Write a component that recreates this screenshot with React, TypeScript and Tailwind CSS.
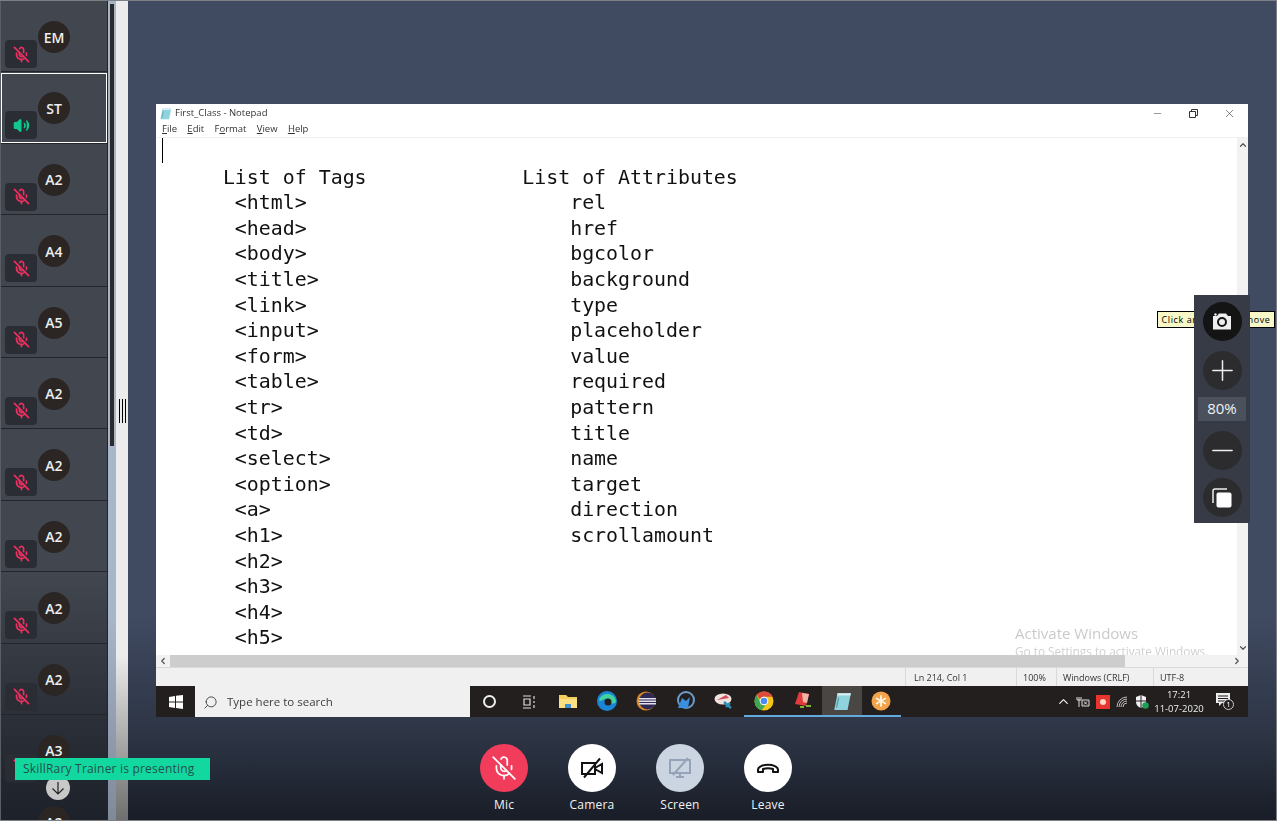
import { ChevronDown, ChevronLeft, ChevronRight, ChevronUp, MicOff, Minus, Plus, Search, Volume2, X } from "lucide-react";

const people = ["EM", "ST", "A2", "A4", "A5", "A2", "A2", "A2", "A2", "A2", "A3", "A2"];

const tags = ["<html>", "<head>", "<body>", "<title>", "<link>", "<input>", "<form>", "<table>", "<tr>", "<td>", "<select>", "<option>", "<a>", "<h1>", "<h2>", "<h3>", "<h4>", "<h5>"];
const attrs = ["rel", "href", "bgcolor", "background", "type", "placeholder", "value", "required", "pattern", "title", "name", "target", "direction", "scrollamount"];

const noteText = [
  "",
  "     List of Tags             List of Attributes",
  ...tags.map((tag, i) => ("      " + tag).padEnd(34, " ") + (attrs[i] ?? "")),
].join("\n");

function ParticipantRow({ name, active }: { name: string; active: boolean }) {
  return (
    <div className="relative h-[71.4px] shrink-0 border-b border-[#23252b]">
      <div className="absolute left-[37px] top-[20px] flex h-8 w-8 items-center justify-center rounded-full bg-[#2b2624] text-[14px] font-semibold text-[#eeeeee]">
        {name}
      </div>
      <div className="absolute left-[4px] top-[39px] flex h-[28px] w-[32px] items-center justify-center rounded-[4px] bg-[#2a2d34]">
        {active ? (
          <Volume2 size={17} className="fill-[#10c78f] text-[#10c78f]" strokeWidth={2} />
        ) : (
          <MicOff size={17} className="text-[#ee2f5f]" strokeWidth={2.4} />
        )}
      </div>
      {active && <div className="absolute bottom-0 left-0 right-0 top-[0.6px] border border-white" />}
    </div>
  );
}

function FolderIcon() {
  return (
    <svg width="20" height="18" viewBox="0 0 20 18">
      <path d="M1 3h7l2 2h9v11H1z" fill="#f6cf5a" />
      <path d="M1 7h18v9H1z" fill="#fbdf83" />
      <path d="M7 12h6v4H7z" fill="#3c8fd0" />
    </svg>
  );
}

function EdgeIcon() {
  return (
    <svg width="20" height="20" viewBox="0 0 20 20">
      <circle cx="10" cy="10" r="10" fill="#1b86d6" />
      <path d="M2 9c3-8 15-8 17 1 0 3-4 3-6 2 1-3-2-5-5-4-3 1-5 3-6 1z" fill="#43d39e" />
      <circle cx="11" cy="11" r="3.5" fill="#231f1e" />
    </svg>
  );
}

function EclipseIcon() {
  return (
    <svg width="20" height="20" viewBox="0 0 20 20">
      <circle cx="10" cy="10" r="9.5" fill="#d9892b" />
      <circle cx="11.5" cy="10" r="8.5" fill="#2f2a55" />
      <path d="M3 7h17v1.6H3zM2.5 9.4h18V11h-18zM3 12h17v1.6H3z" fill="#e4e2ee" />
    </svg>
  );
}

function BlueAppIcon() {
  return (
    <svg width="20" height="20" viewBox="0 0 20 20">
      <circle cx="11" cy="9" r="8" fill="none" stroke="#6d9cc9" strokeWidth="2" />
      <path d="M3 17l4-10 4 3 4-4-2 11z" fill="#3c8fe0" />
    </svg>
  );
}

function PaintIcon() {
  return (
    <svg width="20" height="18" viewBox="0 0 20 18">
      <ellipse cx="9" cy="7" rx="8.5" ry="5.5" fill="#eee3dd" />
      <path d="M3 8l9-5 3 3z" fill="#d8485a" />
      <path d="M10 10l7 6M12 15l4-4" stroke="#2f8fb7" strokeWidth="2.4" />
    </svg>
  );
}

function ChromeIcon() {
  return (
    <svg width="20" height="20" viewBox="0 0 20 20">
      <circle cx="10" cy="10" r="9.5" fill="#f5c518" />
      <path d="M10 .5a9.5 9.5 0 0 1 8.5 5.2H10a4.3 4.3 0 0 0-4 2.6L2.6 4.2A9.5 9.5 0 0 1 10 .5z" fill="#dd4b3e" />
      <path d="M2.6 4.2L7 12.5l-1.5 5.9A9.5 9.5 0 0 1 2.6 4.2z" fill="#3aa757" />
      <path d="M7 12.5a4.3 4.3 0 0 0 4.5 1.7L7.5 19.2a9.5 9.5 0 0 1-2-.8z" fill="#3aa757" />
      <circle cx="10" cy="10" r="4.3" fill="#fff" />
      <circle cx="10" cy="10" r="3.3" fill="#4a8af4" />
    </svg>
  );
}

function RedNoteIcon() {
  return (
    <svg width="20" height="20" viewBox="0 0 20 20">
      <path d="M6 1l10 2-3 12-11-2z" fill="#e23b3b" />
      <path d="M9 2l7 1-2 9-4-1z" fill="#f0b5a5" />
      <path d="M7 15h4v2H7zM13 14h5v2h-5z" fill="#7fb62f" />
    </svg>
  );
}

function NotepadIcon({ size = 18 }: { size?: number }) {
  return (
    <svg width={size} height={size} viewBox="0 0 18 18">
      <path d="M5 2h12l-3 15H2z" fill="#8fd3dc" />
      <path d="M5 2h12l-.5 2H4.6z" fill="#d7eef2" />
      <path d="M6 6l-2 9" stroke="#4f97a8" strokeWidth="1" />
    </svg>
  );
}

function OrangeIcon() {
  return (
    <svg width="20" height="20" viewBox="0 0 20 20">
      <circle cx="10" cy="10" r="9.5" fill="#f3a44b" />
      <path d="M10 5v10M5.7 7.5l8.6 5M14.3 7.5l-8.6 5" stroke="#fff3df" strokeWidth="1.8" strokeLinecap="round" />
    </svg>
  );
}

const taskIcons = [
  { key: "folder", icon: <FolderIcon />, open: false, current: false },
  { key: "edge", icon: <EdgeIcon />, open: false, current: false },
  { key: "eclipse", icon: <EclipseIcon />, open: false, current: false },
  { key: "blue", icon: <BlueAppIcon />, open: false, current: false },
  { key: "paint", icon: <PaintIcon />, open: false, current: false },
  { key: "chrome", icon: <ChromeIcon />, open: true, current: false },
  { key: "red", icon: <RedNoteIcon />, open: true, current: false },
  { key: "notepad", icon: <NotepadIcon size={20} />, open: true, current: true },
  { key: "orange", icon: <OrangeIcon />, open: true, current: false },
];

function Taskbar() {
  return (
    <div className="flex h-[31px] items-stretch bg-[#231f1e] text-white">
      <div className="flex w-[39px] items-center justify-center">
        <svg width="14" height="14" viewBox="0 0 14 14" fill="#fff">
          <path d="M0 2l6-1v5.5H0zM7 .8L14 0v6.5H7zM0 7.5h6V13l-6-1zM7 7.5h7V14l-7-1z" />
        </svg>
      </div>
      <div className="flex w-[275px] items-center gap-[9px] bg-[#f0f0f0] pl-[8px] pt-px text-[11.5px] text-[#3c3c3c]">
        <Search size={15} className="-scale-x-100 text-[#444]" strokeWidth={1.5} />
        <span>Type here to search</span>
      </div>
      <div className="flex w-[39px] items-center justify-center">
        <div className="h-[13px] w-[13px] rounded-full border-2 border-[#eeeeee]" />
      </div>
      <div className="flex w-[39px] items-center justify-center">
        <svg width="14" height="14" viewBox="0 0 14 14" fill="none" stroke="#ddd" strokeWidth="1.2">
          <path d="M1 1h8M1 13h8M2 4h6v6H2zM12 1v3M12 6v2M12 10v3" />
        </svg>
      </div>
      {taskIcons.map(({ key, icon, open, current }) => (
        <div
          key={key}
          className={`flex w-[39.2px] items-center justify-center border-b-2 ${
            open ? "border-[#64a8dc]" : "border-transparent"
          } ${current ? "bg-[#4a4644]" : ""}`}
        >
          {icon}
        </div>
      ))}
      <div className="ml-auto flex items-center pr-[14px]">
        <ChevronUp size={15} className="text-[#eee]" />
        <svg className="ml-[5px]" width="14" height="12" viewBox="0 0 14 12" fill="none" stroke="#ddd" strokeWidth="1">
          <path d="M3 1v4M1 1v3h4V1M3 5v6M6 4h7v6H6zM8 5.5l3 3M11 5.5l-3 3" />
        </svg>
        <div className="ml-[6px] flex h-[14px] w-[14px] items-center justify-center bg-[#e8352f]">
          <div className="h-[6px] w-[6px] rounded-full bg-[#ffd9c9]" />
        </div>
        <svg className="ml-[6px]" width="12" height="12" viewBox="0 0 12 12" fill="none" stroke="#bbb" strokeWidth="1">
          <path d="M1 11a10 10 0 0 1 10-10M3 11a8 8 0 0 1 8-8M5 11a6 6 0 0 1 6-6M7 11a4 4 0 0 1 4-4" />
        </svg>
        <svg className="ml-[7px]" width="14" height="14" viewBox="0 0 14 14">
          <path d="M6 0l5 2v5c0 3-2 5-5 6-3-1-5-3-5-6V2z" fill="#f2f2f2" />
          <path d="M6 0v13M1 6h10" stroke="#231f1e" strokeWidth="1" />
          <circle cx="10.5" cy="10.5" r="3.3" fill="#1e9e55" />
        </svg>
        <div className="ml-[4px] w-[52px] text-center text-[9.5px] leading-[14px] text-[#eeeeee]">
          <div>17:21</div>
          <div>11-07-2020</div>
        </div>
        <div className="relative ml-[11px] h-[18px] w-[18px]">
          <svg width="15" height="14" viewBox="0 0 15 14" fill="#eee">
            <path d="M0 0h14v10H6l-3 3v-3H0z" />
            <path d="M2 3h10M2 5.5h10M2 8h7" stroke="#231f1e" strokeWidth="1" />
          </svg>
          <span className="absolute left-[7px] top-[6px] flex h-[11px] w-[11px] items-center justify-center rounded-full border border-[#ccc] bg-[#231f1e] text-[8px] leading-none">
            1
          </span>
        </div>
      </div>
    </div>
  );
}

function Notepad() {
  return (
    <div className="ml-[28px] flex h-[613px] w-[1092px] flex-col bg-white blur-[0.3px]">
      <div className="flex h-[18px] items-center pl-[3px] text-[9.5px] text-[#333]">
        <NotepadIcon size={13} />
        <span className="ml-[3px]">First_Class - Notepad</span>
        <div className="ml-auto flex items-center text-[#444]">
          <Minus size={11} strokeWidth={1.2} />
          <svg className="ml-[26px]" width="9" height="9" viewBox="0 0 9 9" fill="none" stroke="#333" strokeWidth="1">
            <path d="M.5 2.5h6v6h-6zM2.5 2.5v-2h6v6h-2" />
          </svg>
          <X size={13} strokeWidth={1.2} className="ml-[25px] mr-[12px]" />
        </div>
      </div>
      <div className="flex h-[16px] items-center gap-[10.3px] border-b border-[#f0f0f0] pl-[6px] text-[9.5px] text-[#333]">
        <span><u>F</u>ile</span>
        <span><u>E</u>dit</span>
        <span>F<u>o</u>rmat</span>
        <span><u>V</u>iew</span>
        <span><u>H</u>elp</span>
      </div>
      <div className="relative min-h-0 flex-1 overflow-hidden">
        <pre className="ml-[7px] mt-px font-['DejaVu_Sans_Mono',monospace] text-[19.9px] leading-[25.6px] text-[#111]">
          {noteText}
        </pre>
        <div className="absolute left-[6px] top-0 h-[25px] w-px bg-black" />
        <div className="absolute left-[859px] top-[486px] text-[15px] leading-[18px] text-[#cacaca]">
          Activate Windows
        </div>
        <div className="absolute left-[859px] top-[506px] whitespace-nowrap text-[11.8px] leading-[14px] text-[#d0d0d0]">
          Go to Settings to activate Windows.
        </div>
        <div className="absolute right-0 top-0 flex h-full w-[11px] flex-col items-center justify-between bg-[#f2f2f2] py-[2px] text-[#555]">
          <ChevronUp size={10} strokeWidth={3} />
          <ChevronDown size={10} strokeWidth={3} />
        </div>
      </div>
      <div className="flex h-[12px] items-center bg-[#f2f2f2] text-[#555]">
        <div className="flex w-[14px] justify-center">
          <ChevronLeft size={10} strokeWidth={3} />
        </div>
        <div className="h-full w-[955px] bg-[#cdcdcd]" />
        <div className="ml-auto flex w-[23px] justify-center">
          <ChevronRight size={10} strokeWidth={3} />
        </div>
      </div>
      <div className="flex h-[19px] items-center border-t border-[#d9d9d9] bg-[#f0f0f0] text-[9px] text-[#333]">
        <div className="ml-[749px] h-full w-[111px] border-l border-[#d9d9d9] pl-[8px] leading-[19px]">Ln 214, Col 1</div>
        <div className="h-full w-[40px] border-l border-[#d9d9d9] pl-[6px] leading-[19px]">100%</div>
        <div className="h-full w-[97px] border-l border-[#d9d9d9] pl-[6px] leading-[19px]">Windows (CRLF)</div>
        <div className="h-full flex-1 border-l border-[#d9d9d9] pl-[6px] leading-[19px]">UTF-8</div>
      </div>
      <Taskbar />
    </div>
  );
}

function CallButton({ label, bg, children }: { label: string; bg: string; children: React.ReactNode }) {
  return (
    <div className="flex w-[88px] flex-col items-center">
      <div className={`flex h-12 w-12 items-center justify-center rounded-full ${bg}`}>{children}</div>
      <span className="mt-[4px] text-[12px] leading-[18px] tracking-[0.2px] text-[#f2f2f2]">{label}</span>
    </div>
  );
}

export default function App() {
  return (
    <div className="relative flex h-[821px] w-[1277px] overflow-hidden border-y border-r border-[#7c8084] bg-[#3f4a60] font-['Open_Sans',sans-serif]">
      <aside className="flex h-full w-[108px] shrink-0 flex-col overflow-hidden border-x border-l-[#5a5e66] border-r-[#23252b] bg-gradient-to-b from-[#41464f] from-70% to-[#1d2129]">
        {people.map((name, i) => (
          <ParticipantRow key={i} name={name} active={i === 1} />
        ))}
      </aside>

      <div className="h-full w-[8px] shrink-0 bg-gradient-to-b from-[#a8b6ca] from-75% to-[#7f8a99] pl-[2px] pt-[3px]">
        <div className="h-[442px] w-[4px] bg-[#2e2a2a]" />
      </div>

      <div className="flex h-full w-[12px] shrink-0 items-center justify-center gap-[2px] bg-gradient-to-b from-[#ececec] from-80% to-[#6f6f6f]">
        <div className="h-[24px] w-px bg-black" />
        <div className="h-[24px] w-px bg-black" />
        <div className="h-[24px] w-px bg-black" />
      </div>

      <main className="flex h-full min-w-0 flex-1 flex-col bg-gradient-to-b from-[#404a61] from-75% via-[#2c3444] via-90% to-[#191d27] pt-[103px]">
        <Notepad />
        <div className="ml-[332px] mt-[27px] flex">
          <CallButton label="Mic" bg="bg-[#f23c5c]">
            <MicOff size={26} className="text-white" strokeWidth={1.6} />
          </CallButton>
          <CallButton label="Camera" bg="bg-white">
            <svg width="24" height="24" viewBox="0 0 24 24" fill="none" stroke="#111" strokeWidth="2">
              <path d="M20 2.5L4 21.5M2 7h13v11H2zM15 12l7-4v9l-7-4" />
            </svg>
          </CallButton>
          <CallButton label="Screen" bg="bg-[#cbd5e1]">
            <svg width="24" height="24" viewBox="0 0 24 24" fill="none" stroke="#94a3b8" strokeWidth="2">
              <path d="M2 4h20v13H2zM12 17v4M8 21h8M20 2L5 19" />
            </svg>
          </CallButton>
          <CallButton label="Leave" bg="bg-white">
            <svg width="22" height="12" viewBox="0 0 22 12" fill="none" stroke="#111" strokeWidth="2" strokeLinejoin="round">
              <path d="M1 8c0-7 20-7 20 0v2h-5V7c-3-1-7-1-10 0v3H1z" />
            </svg>
          </CallButton>
        </div>
      </main>

      <div className="absolute left-[1157px] top-[310px] flex h-[17px] w-[118px] items-center justify-center border border-black bg-[#f7f7c8] text-[9px] tracking-[0.6px] text-black">
        Click and drag to move
      </div>

      <div className="absolute left-[1194px] top-[294px] flex h-[228px] w-[56px] flex-col items-center bg-[#363b46] pt-[7px]">
        <div className="flex h-[39px] w-[39px] items-center justify-center rounded-full bg-[#141414]">
          <svg width="20" height="17" viewBox="0 0 20 17">
            <path d="M1 3h4l2-2.5h7L16 3h3v13.5H1z" fill="#eeeeee" />
            <circle cx="10" cy="9" r="4" fill="none" stroke="#141414" strokeWidth="2" />
            <circle cx="3.5" cy="1.5" r="1.2" fill="#eeeeee" />
          </svg>
        </div>
        <div className="mt-[10px] flex h-[39px] w-[39px] items-center justify-center rounded-full bg-[#2c2c2e]">
          <Plus size={33} className="text-[#eeeeee]" strokeWidth={1.1} />
        </div>
        <div className="mt-[7px] flex h-[24px] w-[48px] items-center justify-center bg-[#4a505c] pb-px text-[15px] text-[#eef2f6]">
          80%
        </div>
        <div className="mt-[10px] flex h-[39px] w-[39px] items-center justify-center rounded-full bg-[#2c2c2e]">
          <Minus size={33} className="text-[#eeeeee]" strokeWidth={1.1} />
        </div>
        <div className="mt-[8px] flex h-[39px] w-[39px] items-center justify-center rounded-full bg-[#2c2c2e]">
          <svg width="20" height="20" viewBox="0 0 20 20">
            <path d="M1 15V3q0-2 2-2h12" fill="none" stroke="#eeeeee" strokeWidth="1.5" />
            <rect x="4.5" y="4.5" width="15" height="15" rx="2" fill="#ffffff" />
          </svg>
        </div>
      </div>

      <div className="absolute left-[46px] top-[775px] flex h-[24px] w-[24px] items-center justify-center rounded-full bg-[#c8c8c8]">
        <svg width="14" height="14" viewBox="0 0 14 14" fill="none" stroke="#222" strokeWidth="1.2">
          <path d="M7 1v12M1.5 7.5L7 13l5.5-5.5" />
        </svg>
      </div>

      <div className="absolute left-[15px] top-[757px] flex h-[22px] w-[195px] items-center bg-[#12d8a0] pl-[8px] text-[12px] tracking-[0.2px] text-[#22504a]">
        SkillRary Trainer is presenting
      </div>
    </div>
  );
}
